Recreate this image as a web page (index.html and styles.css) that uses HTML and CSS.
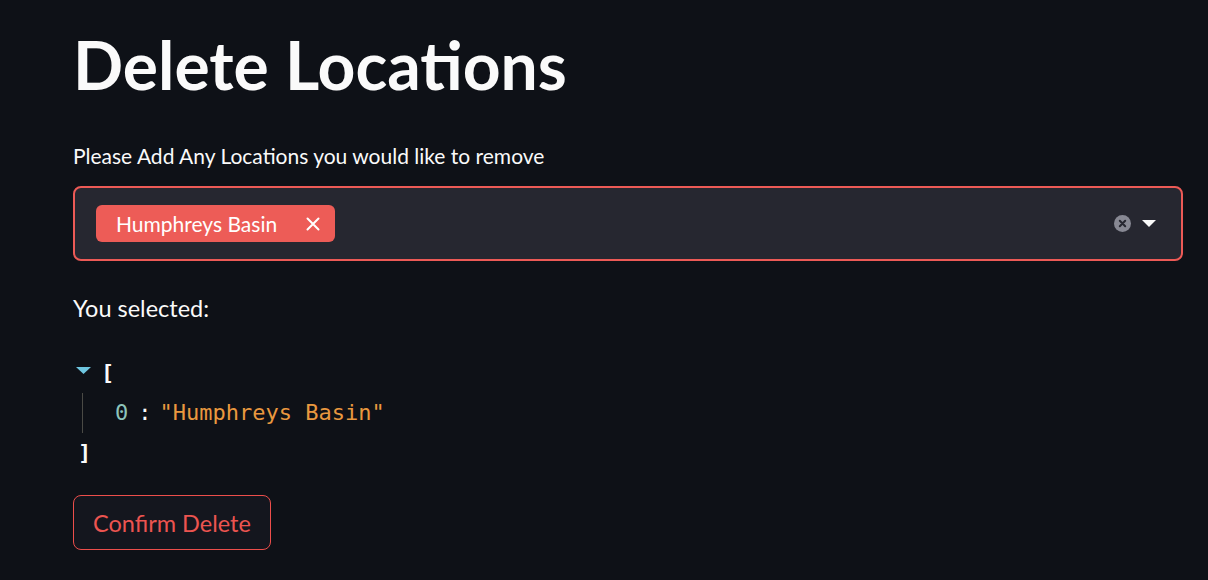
FILE: index.html
```html
<!DOCTYPE html>
<html>
<head>
<meta charset="utf-8">
<link rel="stylesheet" href="styles.css">
</head>
<body>
<main class="main">
  <h1 class="title">Delete Locations</h1>
  <label class="label">Please Add Any Locations you would like to remove</label>
  <div class="select">
    <div class="chips">
      <span class="chip">Humphreys Basin
        <svg class="chip-x" width="14" height="14" viewBox="0 0 14 14"><path d="M1.5 1.5 L12.5 12.5 M12.5 1.5 L1.5 12.5" stroke="#fff" stroke-width="2" stroke-linecap="round"/></svg>
      </span>
    </div>
    <div class="controls">
      <svg class="clear" width="17" height="17" viewBox="0 0 17 17"><circle cx="8.5" cy="8.5" r="8.5" fill="#878893"/><path d="M5.8 5.8 L11.2 11.2 M11.2 5.8 L5.8 11.2" stroke="#262730" stroke-width="2" stroke-linecap="round"/></svg>
      <svg class="caret" width="14" height="7" viewBox="0 0 14 7"><path d="M0 0 L14 0 L7 7 Z" fill="#fafafa"/></svg>
    </div>
  </div>
  <p class="selected">You selected:</p>
  <div class="json">
    <div class="json-row">
      <svg class="toggle" width="15" height="7" viewBox="0 0 15 7"><path d="M0 0 L15 0 L7.5 7 Z" fill="#6ec6e0"/></svg>
      <span class="bracket">[</span>
    </div>
    <div class="json-body">
      <div class="json-item"><span class="key">0</span><span class="colon">:</span><span class="str">"Humphreys Basin"</span></div>
    </div>
    <div class="json-close"><span class="bracket">]</span></div>
  </div>
  <button class="btn">Confirm Delete</button>
</main>
</body>
</html>
```
FILE: styles.css
```css
html, body {
  margin: 0;
  padding: 0;
  background: #0e1117;
  color: #fafafa;
  font-family: "Lato", "Noto Sans", sans-serif;
}
.main {
  padding: 20px 25px 0 73px;
  display: flex;
  flex-direction: column;
  align-items: flex-start;
}
.title {
  margin: 0;
  font-size: 66px;
  font-weight: 700;
  line-height: 90px;
  letter-spacing: 0;
}
.label {
  margin-top: 32px;
  font-size: 21px;
  line-height: 28px;
}
.select {
  align-self: stretch;
  margin-top: 16px;
  height: 75px;
  box-sizing: border-box;
  border: 2px solid #ec5a56;
  border-radius: 8px;
  background: #262730;
  display: flex;
  align-items: center;
  justify-content: space-between;
  padding: 0 25px 0 21px;
}
.chips { display: flex; }
.chip {
  display: inline-flex;
  align-items: center;
  gap: 29px;
  background: #ed5c57;
  color: #fff;
  border-radius: 6px;
  height: 37px;
  padding: 0 15px 0 20px;
  font-size: 21px;
}
.controls {
  display: flex;
  align-items: center;
  gap: 11px;
}
.selected {
  margin: 32px 0 0;
  font-size: 23.5px;
  line-height: 30px;
}
.json {
  margin-top: 30px;
  font-family: "DejaVu Sans Mono", monospace;
  font-size: 22px;
  line-height: 40px;
}
.json-row {
  display: flex;
  align-items: center;
  gap: 10px;
  margin-left: 3px;
}
.toggle { margin-top: -6px; }
.bracket { color: #fafafa; font-weight: 600; }
.json-body {
  margin-left: 9px;
  border-left: 1px solid #4a4a45;
  padding-left: 32px;
}
.key { color: #8cc4bb; }
.colon { color: #fafafa; margin: 0 8px 0 10px; }
.str { color: #e9983f; }
.json-close { margin-left: 5px; }
.btn {
  margin-top: 22px;
  background: #14161e;
  border: 1px solid #ec4e4b;
  border-radius: 8px;
  color: #ec5450;
  font-family: inherit;
  font-size: 23.5px;
  height: 55px;
  padding: 0 19px;
}
```
